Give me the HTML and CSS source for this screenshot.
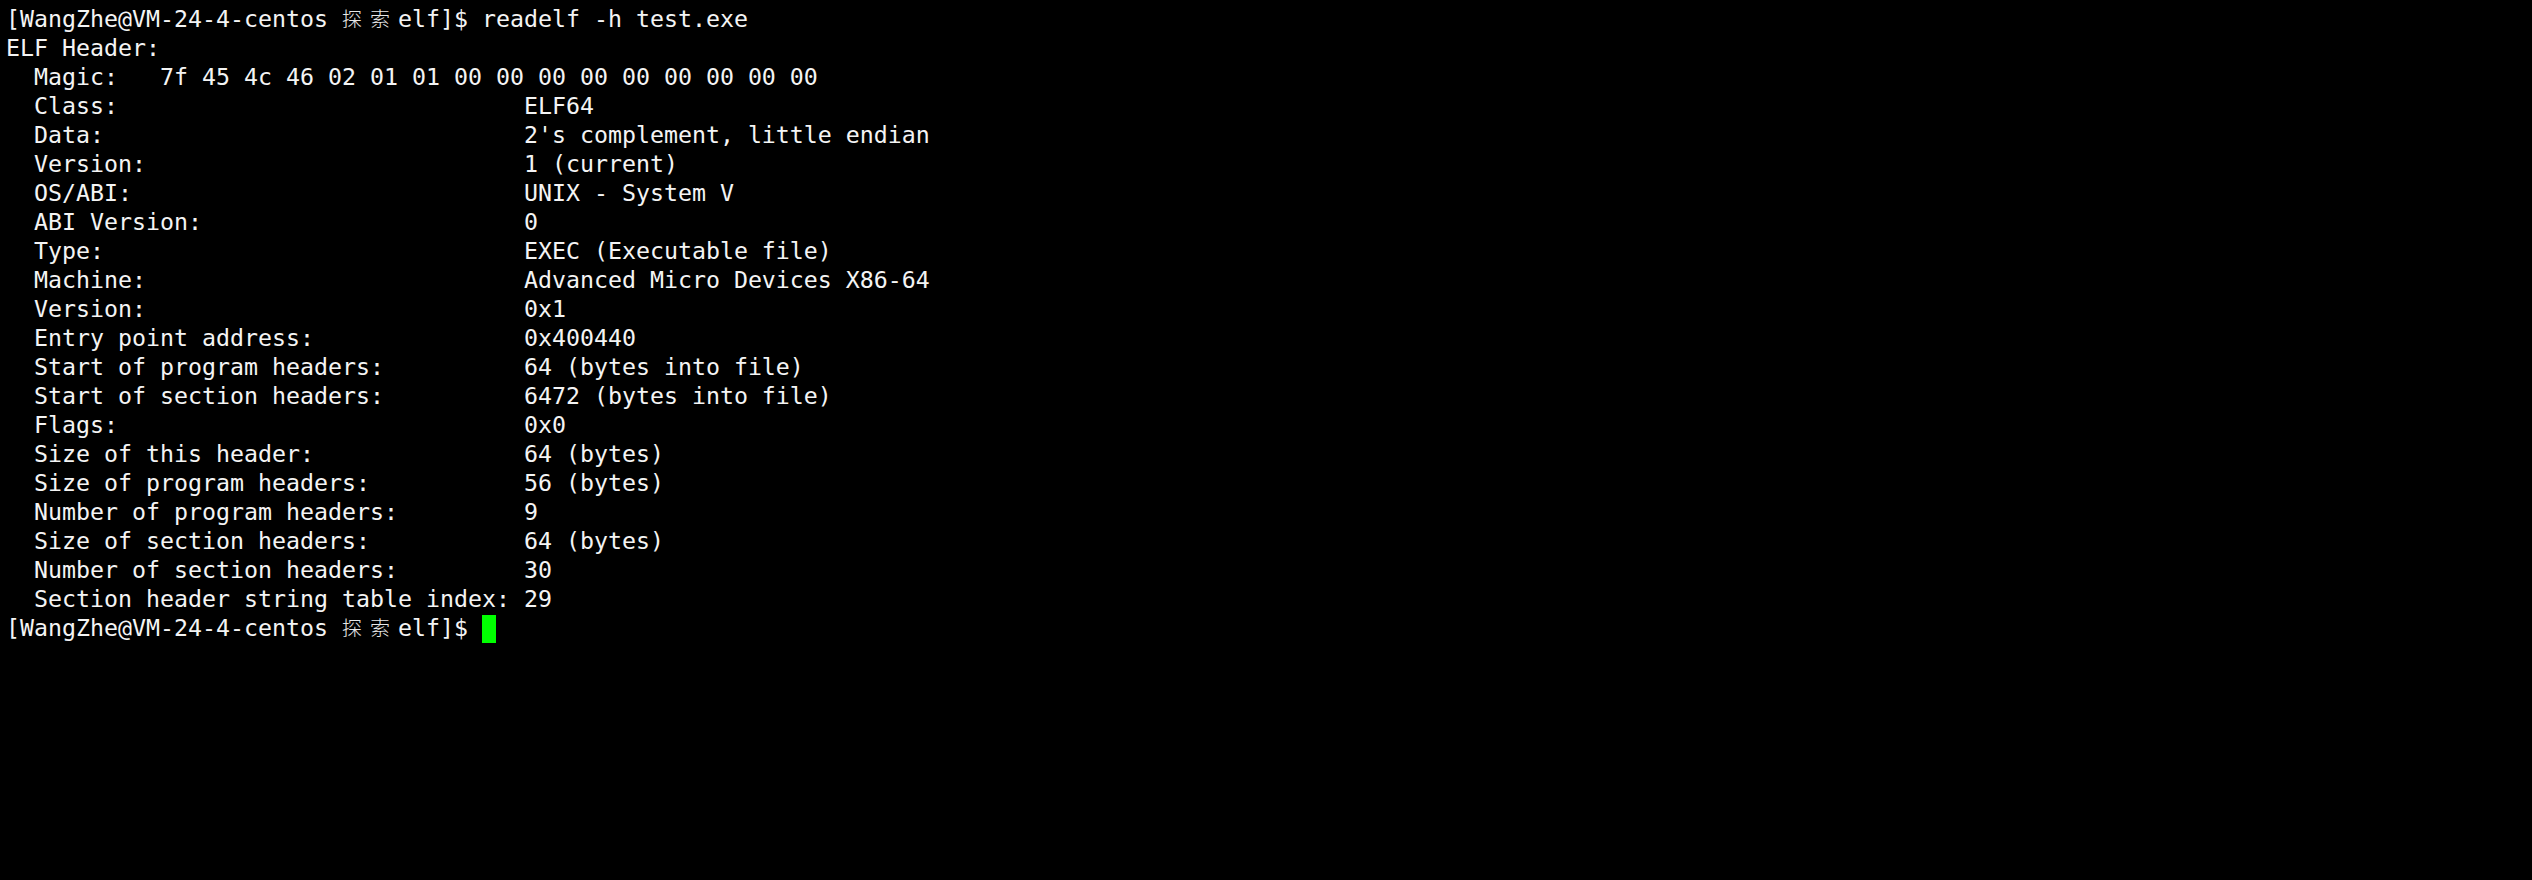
FILE: index.html
```html
<!DOCTYPE html>
<html lang="en">
<head>
<meta charset="utf-8">
<title>readelf -h test.exe</title>
<link rel="stylesheet" href="styles.css">
</head>
<body>
<div class="terminal">
<div class="line">[WangZhe@VM-24-4-centos <span class="cjk">探</span><span class="cjk">索</span>elf]$ readelf -h test.exe</div>
<div class="line">ELF Header:</div>
<div class="line">  Magic:   7f 45 4c 46 02 01 01 00 00 00 00 00 00 00 00 00 </div>
<div class="line">  Class:                             ELF64</div>
<div class="line">  Data:                              2's complement, little endian</div>
<div class="line">  Version:                           1 (current)</div>
<div class="line">  OS/ABI:                            UNIX - System V</div>
<div class="line">  ABI Version:                       0</div>
<div class="line">  Type:                              EXEC (Executable file)</div>
<div class="line">  Machine:                           Advanced Micro Devices X86-64</div>
<div class="line">  Version:                           0x1</div>
<div class="line">  Entry point address:               0x400440</div>
<div class="line">  Start of program headers:          64 (bytes into file)</div>
<div class="line">  Start of section headers:          6472 (bytes into file)</div>
<div class="line">  Flags:                             0x0</div>
<div class="line">  Size of this header:               64 (bytes)</div>
<div class="line">  Size of program headers:           56 (bytes)</div>
<div class="line">  Number of program headers:         9</div>
<div class="line">  Size of section headers:           64 (bytes)</div>
<div class="line">  Number of section headers:         30</div>
<div class="line">  Section header string table index: 29</div>
<div class="line">[WangZhe@VM-24-4-centos <span class="cjk">探</span><span class="cjk">索</span>elf]$ <span class="cursor"> </span></div>
</div>
</body>
</html>
```
FILE: styles.css
```css
html, body {
  margin: 0;
  padding: 0;
  background: #000000;
}
body {
  width: 2532px;
  height: 880px;
  overflow: hidden;
}
.terminal {
  padding: 4px 0 0 6px;
  color: #f4f4f4;
  font-family: "DejaVu Sans Mono", "Liberation Mono", monospace;
  font-size: 23.25px;
  line-height: 29px;
}
.line {
  white-space: pre;
  height: 29px;
}
.cjk {
  display: inline-block;
  width: 28px;
  font-family: "Noto Sans CJK SC", sans-serif;
  font-size: 20px;
  font-weight: 300;
  text-align: left;
  vertical-align: top;
  color: #e8e8e8;
}
.cursor {
  display: inline-block;
  width: 14px;
  height: 28px;
  background: #00ff00;
  vertical-align: top;
  margin-top: 2px;
}
```
